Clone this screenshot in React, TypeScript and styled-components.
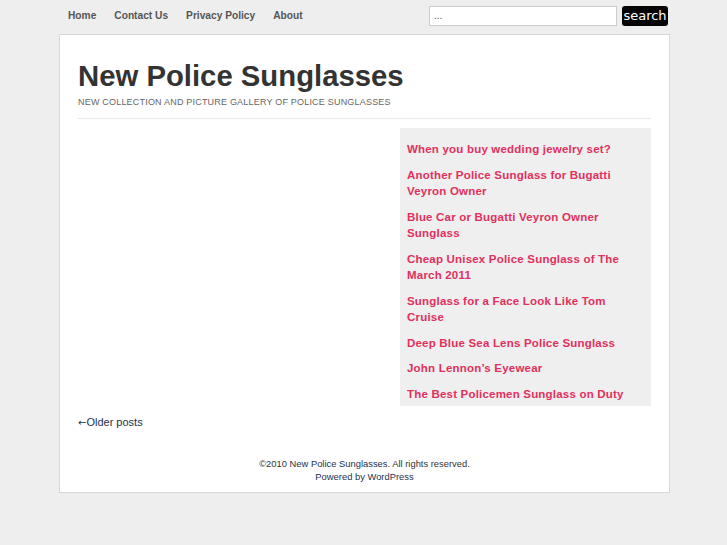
import styled, { createGlobalStyle } from "styled-components";

const GlobalStyle = createGlobalStyle`
    html, body {
        margin: 0;
        padding: 0;
        background: #eeeeee;
        font-family: 'Liberation Sans', Arial, sans-serif;
    }
    a { text-decoration: none; }
`

const Page = styled.div`
    width: 727px;
    min-height: 545px;
    background: #eeeeee;
`

const TopBar = styled.div`
    height: 33px;
    display: flex;
    align-items: center;
    justify-content: space-between;
    padding: 0 59px 0 68px;
    box-sizing: border-box;
`

const Nav = styled.ul`
    display: flex;
    gap: 18px;
    margin: 0;
    padding: 0 0 6px;
    list-style: none;

    a {
        font-size: 10.2px;
        font-weight: bold;
        color: #555555;
    }
`

const SearchForm = styled.form`
    display: flex;
    align-items: center;
    gap: 5px;
    padding-bottom: 1px;
`

const SearchInput = styled.div`
    width: 188px;
    height: 20px;
    background: #ffffff;
    border: 1px solid #cccccc;
    box-sizing: border-box;
    font-size: 10px;
    color: #555;
    padding: 3px 4px;
`

const SearchButton = styled.button`
    height: 20px;
    width: 46px;
    padding: 0;
    border: none;
    border-radius: 3px;
    background: #050505;
    color: #ffffff;
    font-family: 'DejaVu Sans', sans-serif;
    font-size: 13px;
    line-height: 20px;
`

const Wrapper = styled.div`
    margin: 1px 0 0 59px;
    width: 611px;
    background: #ffffff;
    border: 1px solid #d8d8d8;
    box-sizing: border-box;
    padding: 0 18px 9px;
`

const Header = styled.div`
    padding: 25px 0 11px;
    border-bottom: 1px solid #eaeaea;

    h1 {
        margin: 0;
        font-size: 29.3px;
        line-height: 32px;
        font-weight: bold;
        color: #333333;
    }
    p {
        margin: 5px 0 0;
        font-size: 9px;
        letter-spacing: 0.2px;
        text-transform: uppercase;
        color: #666666;
    }
`

const Main = styled.div`
    display: flex;
    justify-content: space-between;
    padding-top: 9px;
`

const Content = styled.div`
    flex: 1;
`

const Sidebar = styled.ul`
    width: 251px;
    margin: 0;
    padding: 13px 7px 4px;
    box-sizing: border-box;
    list-style: none;
    background: #efefef;
`

const SideItem = styled.li`
    margin-bottom: 9px;
    font-size: 11.5px;
    line-height: 16.5px;

    &:last-child { margin-bottom: 0; }

    a {
        font-weight: bold;
        color: #e2305e;
        letter-spacing: 0.2px;
    }
`

const OlderPosts = styled.a`
    display: block;
    margin-top: 9px;
    font-size: 11px;
    line-height: 14px;
    color: #23324f;
`

const Arrow = styled.span`
    font-family: 'DejaVu Sans', sans-serif;
    font-size: 10px;
`

const Footer = styled.div`
    margin-top: 27px;
    text-align: center;
    font-size: 9.4px;
    line-height: 13px;
    color: #333333;

    a { color: #23324f; }
`

const posts = [
    "When you buy wedding jewelry set?",
    "Another Police Sunglass for Bugatti Veyron Owner",
    "Blue Car or Bugatti Veyron Owner Sunglass",
    "Cheap Unisex Police Sunglass of The March 2011",
    "Sunglass for a Face Look Like Tom Cruise",
    "Deep Blue Sea Lens Police Sunglass",
    "John Lennon’s Eyewear",
    "The Best Policemen Sunglass on Duty",
]

const App = () => {
    return (
        <Page>
            <GlobalStyle />
            <TopBar>
                <Nav>
                    <li><a href="#">Home</a></li>
                    <li><a href="#">Contact Us</a></li>
                    <li><a href="#">Privacy Policy</a></li>
                    <li><a href="#">About</a></li>
                </Nav>
                <SearchForm>
                    <SearchInput>...</SearchInput>
                    <SearchButton type="button">search</SearchButton>
                </SearchForm>
            </TopBar>

            <Wrapper>
                <Header>
                    <h1>New Police Sunglasses</h1>
                    <p>New collection and picture gallery of police sunglasses</p>
                </Header>

                <Main>
                    <Content />
                    <Sidebar>
                        {posts.map((p, i) => (
                            <SideItem key={i}><a href="#">{p}</a></SideItem>
                        ))}
                    </Sidebar>
                </Main>

                <OlderPosts href="#"><Arrow>←</Arrow>Older posts</OlderPosts>

                <Footer>
                    ©2010 <a href="#">New Police Sunglasses</a>. All rights reserved.<br />
                    <a href="#">Powered by WordPress</a>
                </Footer>
            </Wrapper>
        </Page>
    )
}

export default App;
